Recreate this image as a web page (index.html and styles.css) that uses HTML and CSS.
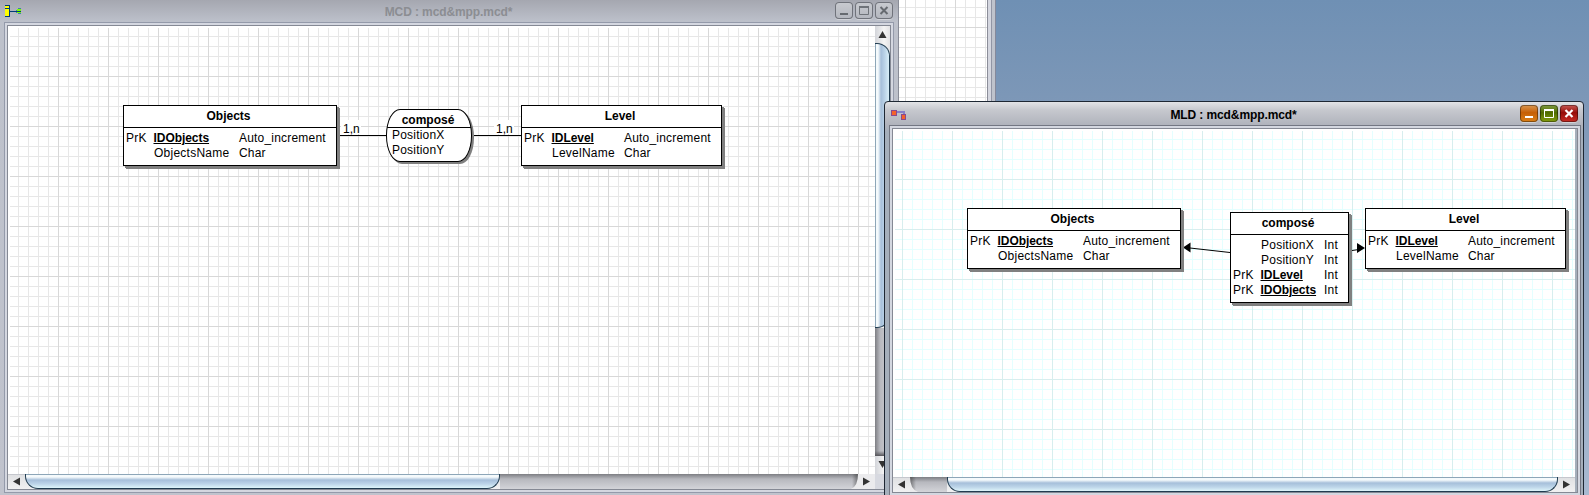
FILE: index.html
```html
<!DOCTYPE html>
<html lang="fr">
<head>
<meta charset="utf-8">
<title>MCD / MLD</title>
<link rel="stylesheet" href="styles.css">
</head>
<body>
<main class="desktop">
  <section class="back-window"><div class="back-canvas"></div><div class="back-edge"></div></section>

  <section class="window mcd">
    <header class="titlebar">
      <svg class="app-icon" width="17" height="13" viewBox="0 0 17 13" shape-rendering="crispEdges">
        <path d="M0 1h4v10H0z" fill="#ff0"/><path d="M0 0h5v1H0zM0 3h4v1H0zM0 11h5v1H0zM4 1h1v10H4z" fill="#003c78"/>
        <path d="M12 4h4v4h-4z" fill="#7dff00"/><path d="M13 3h3v1h-3zM11 5h1v3h-1zM13 8h3v1h-3z" fill="#3e82a5"/><path d="M5 6h11v1H5z" fill="#003c78"/>
      </svg>
      <h1 class="title">MCD : mcd&amp;mpp.mcd*</h1>
      <div class="controls">
        <span class="control"><svg width="18" height="17"><path d="M5 12h8" stroke="#666a70" stroke-width="2"/></svg></span>
        <span class="control"><svg width="18" height="17"><path d="M4.500 4.500h9v8h-9z" fill="none" stroke="#6f7379"/><path d="M4 5h10" stroke="#6f7379" stroke-width="2"/></svg></span>
        <span class="control"><svg width="18" height="17"><path d="M5.500 5l7 7m0-7l-7 7" stroke="#666a70" stroke-width="2"/></svg></span>
      </div>
    </header>
    <div class="frame">
      <div class="canvas mcd-canvas">
        <svg class="links" width="867" height="448">
          <path d="M332 109.500H378M466 109.500H513" stroke="#000"/>
          <path d="M333 94h20v14h-20zM486 94h20v14h-20z" fill="#fff"/>
        </svg>
        <span class="card card-left">1,n</span>
        <span class="card card-right">1,n</span>
        <article class="entity objects">
          <h2>Objects</h2>
          <div class="rows"><span>PrK</span><b>IDObjects</b><span>Auto_increment</span><span></span><span class="field">ObjectsName</span><span>Char</span></div>
        </article>
        <article class="association">
          <h2>composé</h2>
          <div>PositionX</div><div>PositionY</div>
        </article>
        <article class="entity level">
          <h2>Level</h2>
          <div class="rows"><span>PrK</span><b>IDLevel</b><span>Auto_increment</span><span></span><span class="field">LevelName</span><span>Char</span></div>
        </article>
      </div>
      <div class="vscroll">
        <svg width="15" height="17"><path d="M7.500 5l4 7h-8z" fill="#333"/></svg>
        <div class="vthumb"></div>
        <div class="vtrack"></div>
        <svg width="15" height="18"><path d="M7.500 12l4-7h-8z" fill="#333"/></svg>
      </div>
      <div class="hscroll">
        <svg width="17" height="15"><path d="M5 7.500l7-4v8z" fill="#333"/></svg>
        <div class="hthumb"></div>
        <div class="htrack"></div>
        <svg class="right-arrow" width="24" height="15"><path d="M7 0h17v15H0Q7 12 7 0" fill="#ebebed"/><path d="M19 7.500l-7-4v8z" fill="#333"/></svg>
      </div>
      <div class="corner"></div>
    </div>
  </section>

  <section class="window mld">
    <header class="titlebar">
      <svg class="app-icon" width="16" height="11" viewBox="0 0 16 11" shape-rendering="crispEdges">
        <path d="M6 2h7v3" fill="none" stroke="#8580c8" stroke-width="2"/>
        <path d="M0 0h6v6H0zM10 4h5v6h-5z" fill="#8a4a8c"/><path d="M1 1h4v4H1zM11 5h3v4h-3z" fill="#f4622a"/>
      </svg>
      <h1 class="title">MLD : mcd&amp;mpp.mcd*</h1>
      <div class="controls">
        <span class="control minimize"><svg width="18" height="17"><path d="M5 12h8" stroke="#fff" stroke-width="2"/></svg></span>
        <span class="control maximize"><svg width="18" height="17"><path d="M4.500 4.500h9v8h-9z" fill="none" stroke="#fff"/><path d="M4 5h10" stroke="#fff" stroke-width="2"/></svg></span>
        <span class="control close"><svg width="18" height="17"><path d="M5.500 5l7 7m0-7l-7 7" stroke="#fff" stroke-width="2.200"/></svg></span>
      </div>
    </header>
    <div class="frame">
      <div class="canvas mld-canvas">
        <svg class="links" width="682" height="348">
          <path d="M297 119L337 123.500M459 121.500L466 120.500" stroke="#000" fill="none"/>
          <path d="M290 118.500l7.500-5v10zM472 119l-8-5v10z"/>
        </svg>
        <article class="entity objects">
          <h2>Objects</h2>
          <div class="rows"><span>PrK</span><b>IDObjects</b><span>Auto_increment</span><span></span><span class="field">ObjectsName</span><span>Char</span></div>
        </article>
        <article class="entity relation">
          <h2>composé</h2>
          <div class="rows"><span></span><span class="field">PositionX</span><span>Int</span><span></span><span class="field">PositionY</span><span>Int</span><span>PrK</span><b>IDLevel</b><span>Int</span><span>PrK</span><b>IDObjects</b><span>Int</span></div>
        </article>
        <article class="entity level">
          <h2>Level</h2>
          <div class="rows"><span>PrK</span><b>IDLevel</b><span>Auto_increment</span><span></span><span class="field">LevelName</span><span>Char</span></div>
        </article>
      </div>
      <div class="hscroll">
        <svg width="17" height="15"><path d="M5 7.500l7-4v8z" fill="#333"/></svg>
        <div class="htrack"><svg width="8" height="15"><path d="M0 0Q0 12 8 15H0z" fill="#ebebed"/></svg></div>
        <div class="hthumb"></div>
        <svg width="17" height="15"><path d="M12 7.500l-7-4v8z" fill="#333"/></svg>
      </div>
    </div>
  </section>
</main>
</body>
</html>
```
FILE: styles.css
```css
* { box-sizing: border-box; }
body { margin: 0; font: 12px/15px "Liberation Sans", Arial, sans-serif; color: #000; }
svg { display: block; flex: none; }
h1, h2 { margin: 0; font-size: 12px; font-weight: bold; }

.desktop {
  position: relative;
  width: 1589px;
  height: 495px;
  overflow: hidden;
  background: linear-gradient(#6f90b4, #8099b8 25%, #a8b9d0);
}

.back-window { position: absolute; left: 898px; top: 0; display: flex; width: 98px; height: 110px; }
.back-canvas {
  width: 89px;
  background:
    linear-gradient(90deg, #d8d8d8 1px, transparent 1px) 7px 0 / 50px 50px,
    linear-gradient(#d8d8d8 1px, transparent 1px) 0 27px / 50px 50px,
    linear-gradient(90deg, #e7e7e7 1px, transparent 1px) 7px 0 / 10px 10px,
    linear-gradient(#e7e7e7 1px, transparent 1px) 0 7px / 10px 10px,
    #fff;
}
.back-edge {
  width: 9px;
  background: linear-gradient(90deg, #8b8d99 0 1px, #d5d7e0 1px 4px, #9296a5 4px 5px, #bfc3cc 5px 8px, #85899b 8px);
}

.window { position: absolute; display: flex; flex-direction: column; }
.mcd {
  left: 0;
  top: 0;
  width: 899px;
  height: 500px;
  padding: 0 5px 0 4px;
  border-right: 1px solid #898c97;
  background: linear-gradient(#a5a7b0, #bdc1cb 22px, #c0c3cd);
}
.mld {
  left: 884px;
  top: 101px;
  width: 700px;
  height: 400px;
  padding: 0 4px 0 3px;
  border: 1px solid #1e2733;
  border-radius: 4px 4px 0 0;
  background: linear-gradient(#e2e3e6, #c6c8ce 8px, #b0b3bc 23px, #a5afbb 30px);
}

.titlebar { position: relative; flex: none; display: flex; justify-content: center; }
.mcd .titlebar { height: 22px; }
.mld .titlebar { height: 23px; }
.app-icon { position: absolute; }
.mcd .app-icon { left: 1px; top: 5px; }
.mld .app-icon { left: 3px; top: 8px; }
.title { letter-spacing: -0.1px; line-height: 15px; }
.mcd .title { padding-top: 5px; color: #8b8d92; }
.mld .title { padding: 6px 0 0; }
.controls { position: absolute; top: 2px; right: 0; display: flex; gap: 2px; }
.mld .controls { right: 1px; }
.control {
  width: 18px;
  height: 17px;
  border-radius: 4px;
  box-shadow: inset 0 0 0 1px #70737b, 0 1px #d0d2d8;
  background: linear-gradient(#c9cbd0, #b3b6be);
}
.mld .control { margin-top: 1px; box-shadow: inset 0 0 0 1px #0006, 0 1px #d0d2d8; }
.control.minimize { background: linear-gradient(#d99954, #c65f05 45%, #db8118); }
.control.maximize { background: linear-gradient(#819d43, #4f6b00 45%, #859f10); }
.control.close { background: linear-gradient(#c95b56, #960d09 45%, #c92d26); }

.frame {
  flex: none;
  display: grid;
  box-shadow: inset 0 0 0 1px #949aaa, inset 0 0 0 3px #d4d7e0, inset 0 0 0 4px #858994;
}
.mcd .frame { width: 890px; height: 471px; padding: 4px 3px 3px 4px; grid-template: 448px 15px / 867px 15px; }
.mld .frame {
  width: 692px;
  height: 371px;
  margin-left: 1px;
  padding: 4px;
  grid-template: 348px 15px / 682px;
  box-shadow: inset 0 0 0 1px #737783, inset 0 0 0 3px #d4d7e0, inset 0 0 0 4px #858994;
}

.canvas { position: relative; overflow: hidden; border: solid #fff; border-width: 2px 0 0 2px; }
.mcd-canvas {
  background:
    linear-gradient(90deg, #d8d8d8 1px, transparent 1px) 48px 0 / 50px 50px,
    linear-gradient(#d8d8d8 1px, transparent 1px) 0 48px / 50px 50px,
    linear-gradient(90deg, #e7e7e7 1px, transparent 1px) 8px 0 / 10px 10px,
    linear-gradient(#e7e7e7 1px, transparent 1px) 0 8px / 10px 10px,
    #fff;
}
.mld-canvas {
  background:
    linear-gradient(90deg, #d7eeee 1px, transparent 1px) 7px 0 / 50px 50px,
    linear-gradient(#d7eeee 1px, transparent 1px) 0 48px / 50px 50px,
    linear-gradient(90deg, #e4ffff 1px, transparent 1px) 7px 0 / 10px 10px,
    linear-gradient(#e4ffff 1px, transparent 1px) 0 8px / 10px 10px,
    #fff;
}
.links { position: absolute; left: -2px; top: -2px; }

.entity {
  position: absolute;
  border: 1px solid #000;
  background: #fff;
  box-shadow: 2px 2px #808080, 3px 3px #808080;
}
.entity h2 { height: 22px; padding-right: 3px; border-bottom: 1px solid #000; line-height: 20px; text-align: center; }
.rows { display: grid; padding: 3px 0 0 2px; white-space: nowrap; letter-spacing: 0.2px; }
.rows b {
  justify-self: start;
  margin-left: -0.5px;
  text-decoration: underline;
  text-underline-offset: 1px;
  text-decoration-thickness: 1px;
  letter-spacing: -0.05px;
}
.field { letter-spacing: 0.25px; }
.objects { width: 214px; height: 61px; }
.objects .rows { grid-template-columns: 28px 85px auto; }
.level { width: 201px; height: 61px; }
.level .rows { grid-template-columns: 28px 72px auto; }
.relation { left: 335px; top: 81px; width: 119px; height: 91px; }
.relation .rows { grid-template-columns: 28px 63px auto; }
.mcd .objects { left: 113px; top: 77px; }
.mcd .level { left: 511px; top: 77px; }
.mld .objects { left: 72px; top: 77px; }
.mld .level { left: 470px; top: 77px; }

.association {
  position: absolute;
  left: 376px;
  top: 81px;
  width: 86px;
  height: 53px;
  padding-left: 5px;
  border: 1px solid #000;
  border-radius: 14px / 26px;
  background: linear-gradient(transparent 17px, #000 17px 18px, transparent 18px) no-repeat, #fff;
  box-shadow: 2px 2px #808080;
  letter-spacing: 0.2px;
}
.association h2 { height: 18px; margin: 0 2px 0 -5px; line-height: 20px; text-align: center; letter-spacing: 0; }
.card { position: absolute; top: 94px; }
.card-left { left: 333px; }
.card-right { left: 486px; }

.vscroll, .hscroll { display: flex; }
.vscroll { flex-direction: column; background: linear-gradient(90deg, #d3d5da, #f4f4f4 60%, #e2e2e4); }
.vthumb {
  flex: none;
  height: 285px;
  border: solid #213c50;
  border-width: 1px 1px 1px 0;
  border-radius: 0 13px 13px 0;
  background: linear-gradient(90deg, #8da6b8 0 1px, #f5fafc 1px 3px, #a6bfda 6px, #bdd5e9 10px, #d9eff8);
}
.vtrack { flex: 1; background: linear-gradient(transparent 96%, #55555a), linear-gradient(90deg, #7d7e83, #b7b8be 5px, #cfd0d5); }
.hscroll { background: linear-gradient(#c5c7cd 0 1px, #e0e1e3 1px, #f1f1f2); }
.hthumb {
  flex: none;
  border: solid #213c50;
  border-width: 0 1px 1px;
  border-radius: 0 0 13px 13px;
  background: linear-gradient(#8da6b8 0 1px, #f5fafc 1px 3px, #a6bfda 6px, #bdd5e9 10px, #def5fa);
}
.mcd .hthumb { width: 475px; }
.mld .hthumb { width: 611px; }
.htrack { flex: 1; }
.mcd .htrack { margin-right: -7px; background: linear-gradient(90deg, transparent calc(100% - 6px), #3338), linear-gradient(#7d7e83, #b7b8be 5px, #d3d4d9); }
.mld .htrack { background: linear-gradient(90deg, #3338, transparent 6px), linear-gradient(#7d7e83, #b7b8be 5px, #d3d4d9); }
.right-arrow { position: relative; }
.corner { background: #d7d9e0; }
```
